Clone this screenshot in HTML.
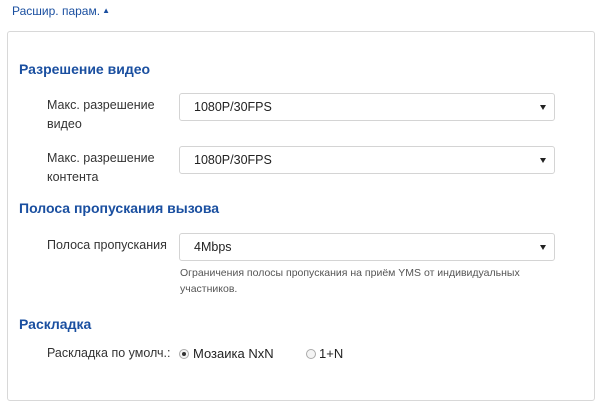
<!DOCTYPE html>
<html><head><meta charset="utf-8"><style>
*{margin:0;padding:0;box-sizing:border-box}
body{width:600px;height:406px;background:#fff;font-family:"Liberation Sans","DejaVu Sans",sans-serif;position:relative;overflow:hidden;color:#333}
.a{position:absolute;white-space:nowrap}
.top{left:12px;top:4px;font-size:12px;color:#1a4fa0}
.panel{position:absolute;left:7px;top:31px;width:588px;height:370px;border:1px solid #d8d8d8;border-radius:3px}
.h{font-size:14px;font-weight:bold;color:#1a4fa0}
.lbl{font-size:12.5px;color:#333;line-height:19px}
.sel{position:absolute;left:179px;width:376px;height:28px;border:1px solid #d4d4d4;border-radius:3px;font-size:12.5px;padding-left:14px;line-height:26px;color:#222}
.sel:after{content:"";position:absolute;right:8px;top:11px;border-left:3px solid transparent;border-right:3px solid transparent;border-top:5px solid #222}
.hint{font-size:10.5px;color:#555;line-height:16px}
.r{position:absolute;width:10px;height:10px;border:1px solid #aaa;border-radius:50%;background:#f4f4f4}
.r.on:after{content:"";position:absolute;left:2px;top:2px;width:4px;height:4px;border-radius:50%;background:#333}
</style></head><body>
<div class="a top">Расшир. парам.<span style="font-size:8px;position:relative;top:-2px;margin-left:2px">▲</span></div>
<div class="panel"></div>
<div class="a h" style="left:19px;top:61px">Разрешение видео</div>
<div class="a lbl" style="left:47px;top:96px">Макс. разрешение<br>видео</div>
<div class="sel" style="top:93px">1080P/30FPS</div>
<div class="a lbl" style="left:47px;top:149px">Макс. разрешение<br>контента</div>
<div class="sel" style="top:146px">1080P/30FPS</div>
<div class="a h" style="left:19px;top:200px">Полоса пропускания вызова</div>
<div class="a lbl" style="left:47px;top:236px">Полоса пропускания</div>
<div class="sel" style="top:233px">4Mbps</div>
<div class="a hint" style="left:180px;top:265px">Ограничения полосы пропускания на приём YMS от индивидуальных<br>участников.</div>
<div class="a h" style="left:19px;top:316px">Раскладка</div>
<div class="a lbl" style="left:47px;top:344px">Раскладка по умолч.:</div>
<div class="r on" style="left:179px;top:349px"></div>
<div class="a lbl" style="left:193px;top:344px;font-size:13px;color:#222">Мозаика NxN</div>
<div class="r" style="left:306px;top:349px"></div>
<div class="a lbl" style="left:319px;top:344px;font-size:13px;color:#222">1+N</div>
</body></html>
